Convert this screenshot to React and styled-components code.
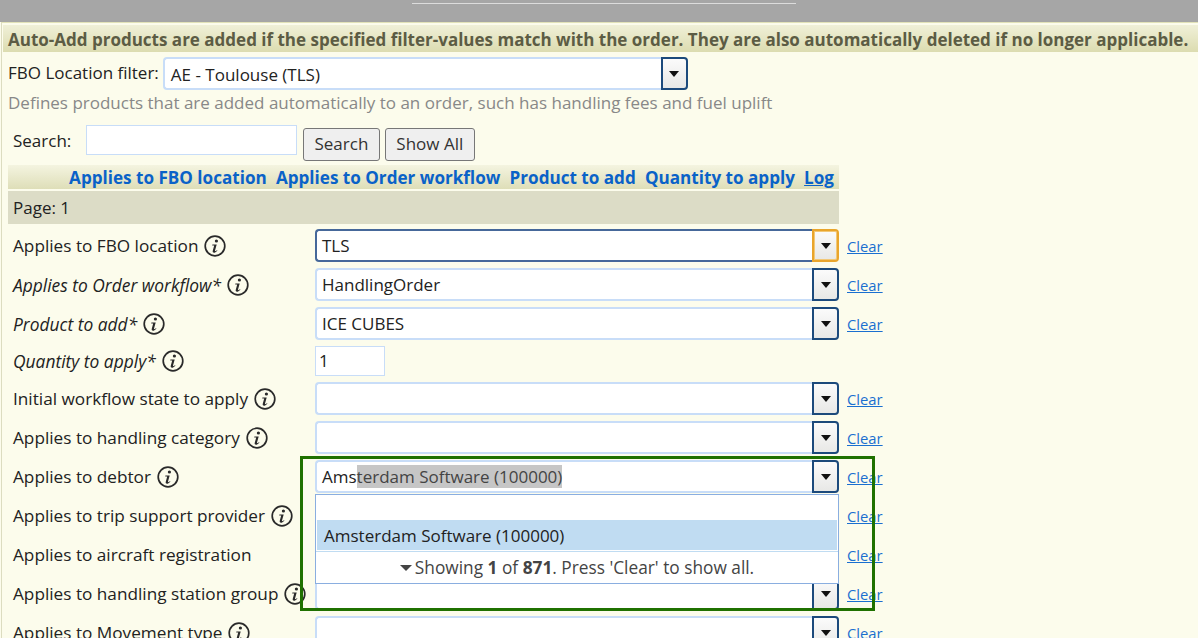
import React from 'react'
import styled, { createGlobalStyle } from 'styled-components'

const GlobalStyle = createGlobalStyle`
  html, body {
    margin: 0;
    padding: 0;
    height: 638px;
    overflow: hidden;
    background: #fcfcec;
  }
  body {
    font-family: 'Open Sans', 'Noto Sans', 'Liberation Sans', sans-serif;
    font-size: 17px;
    color: #222;
  }
`

const rows = [
  { label: 'Applies to FBO location', info: true, value: 'TLS', focused: true },
  { label: 'Applies to Order workflow*', info: true, value: 'HandlingOrder', italic: true },
  { label: 'Product to add*', info: true, value: 'ICE CUBES', italic: true },
  { label: 'Quantity to apply*', info: true, value: '1', italic: true, kind: 'number' },
  { label: 'Initial workflow state to apply', info: true, value: '' },
  { label: 'Applies to handling category', info: true, value: '' },
  { label: 'Applies to debtor', info: true, value: 'Amsterdam Software (100000)', open: true },
  { label: 'Applies to trip support provider', info: true, value: '' },
  { label: 'Applies to aircraft registration', value: '' },
  { label: 'Applies to handling station group', info: true, value: '' },
  { label: 'Applies to Movement type', info: true, value: '' },
]

const InfoIcon = () => (
  <InfoSvg viewBox="0 0 22 22" aria-hidden="true">
    <circle cx="11" cy="11" r="9.8" fill="none" stroke="#2a2a2a" strokeWidth="1.7" />
    <circle cx="12.4" cy="6" r="1.6" fill="#2a2a2a" />
    <path
      d="M8.4 9.4h4.3l-1.7 6.2c-.1.5.2.7.6.5l1.5-.9.3.6-2.3 1.6c-1.3.8-2.7.1-2.4-1.3l1.5-5.7H8.2z"
      fill="#2a2a2a"
    />
  </InfoSvg>
)

const Combo = ({ value, focused, open }) => (
  <ComboBox>
    <ComboInput $focused={focused}>
      {open ? (
        <>
          Ams<Selected>terdam Software (100000)</Selected>
        </>
      ) : (
        value
      )}
    </ComboInput>
    <ComboButton $focused={focused}>
      <Arrow />
    </ComboButton>
  </ComboBox>
)

const App = () => {
  return (
    <>
      <GlobalStyle />
      <TopBar>
        <TopLine />
      </TopBar>
      <Panel>
        <Banner>
          Auto-Add products are added if the specified filter-values match with the order. They are
          also automatically deleted if no longer applicable.
        </Banner>
        <FilterRow>
          <FilterLabel>FBO Location filter:</FilterLabel>
          <Combo value="AE - Toulouse (TLS)" />
        </FilterRow>
        <HelpText>Defines products that are added automatically to an order, such has handling fees and fuel uplift</HelpText>
        <SearchRow>
          <SearchLabel>Search:</SearchLabel>
          <SearchInput />
          <Button>Search</Button>
          <Button>Show All</Button>
        </SearchRow>
        <Grid>
          <HeaderBar>
            <HeaderLink>Applies to FBO location</HeaderLink>
            <HeaderLink>Applies to Order workflow</HeaderLink>
            <HeaderLink>Product to add</HeaderLink>
            <HeaderLink>Quantity to apply</HeaderLink>
            <HeaderLink $underline>Log</HeaderLink>
          </HeaderBar>
          <PageBar>Page: 1</PageBar>
          {rows.map((row) => (
            <Row key={row.label} $short={row.kind === 'number'}>
              <Label $italic={row.italic}>
                {row.label}
                {row.info && <InfoIcon />}
              </Label>
              {row.kind === 'number' ? (
                <NumberBox>{row.value}</NumberBox>
              ) : (
                <Combo value={row.value} focused={row.focused} open={row.open} />
              )}
              {row.kind !== 'number' && <ClearLink>Clear</ClearLink>}
              {row.open && (
                <Popup>
                  <PopupBlank />
                  <PopupItem>Amsterdam Software (100000)</PopupItem>
                  <PopupFooter>
                    <FooterArrow />
                    Showing <b>1</b> of <b>871</b>. Press 'Clear' to show all.
                  </PopupFooter>
                </Popup>
              )}
              {row.open && <Highlight />}
            </Row>
          ))}
        </Grid>
      </Panel>
    </>
  )
}

export default App

const TopBar = styled.div`
  height: 22px;
  background: #a6a6a6;
  display: flex;
  justify-content: flex-start;
  padding: 3px 0 0 412px;
  box-sizing: border-box;
`

const TopLine = styled.div`
  width: 384px;
  height: 1px;
  background: #dcdcdc;
`

const Panel = styled.div`
  margin-left: 1px;
  padding: 2px 0 0 1px;
  border-left: 1px solid #dcdcc0;
  border-top: 1px solid #e2e2b8;
  height: 616px;
  box-sizing: border-box;
  overflow: hidden;
`

const Banner = styled.div`
  height: 27px;
  line-height: 30px;
  padding-left: 5px;
  font-weight: 700;
  white-space: nowrap;
  color: #5c5c44;
  background: linear-gradient(#f0f0d8, #dcdcb0);
`

const FilterRow = styled.div`
  display: flex;
  align-items: center;
  gap: 4px;
  height: 33px;
  margin-top: 5px;
  padding-left: 5px;
  white-space: nowrap;
`

const FilterLabel = styled.span`
  padding-bottom: 3px;
`

const ComboBox = styled.div`
  position: relative;
  display: flex;
  width: 100%;
  height: 33px;
  box-sizing: border-box;
  ${FilterRow} & {
    width: 525px;
  }
`

const ComboInput = styled.div`
  flex: 1;
  min-width: 0;
  padding-left: 5px;
  line-height: 30px;
  color: #222;
  background: #fff;
  border: 2px solid ${(p) => (p.$focused ? '#46689a' : '#c8ddf8')};
  border-right: none;
  border-radius: 4px 0 0 4px;
  white-space: nowrap;
  overflow: hidden;
  box-sizing: border-box;
  ${FilterRow} & {
    padding-left: 6px;
    line-height: 32px;
  }
`

const Selected = styled.span`
  background: #c6c6c6;
  color: #444;
`

const ComboButton = styled.div`
  width: 27px;
  display: flex;
  align-items: center;
  justify-content: center;
  box-sizing: border-box;
  background: linear-gradient(#fbfbfb, #e8e8e6);
  border: 2px solid ${(p) => (p.$focused ? '#e9a52c' : '#1c4a7c')};
  box-shadow: ${(p) => (p.$focused ? 'inset 0 0 0 1px #f2c878' : 'none')};
  border-radius: 0 4px 4px 0;
`

const Arrow = styled.span`
  width: 0;
  height: 0;
  border-left: 5.5px solid transparent;
  border-right: 5.5px solid transparent;
  border-top: 6px solid #111;
`

const HelpText = styled.div`
  margin-top: 1px;
  height: 24px;
  line-height: 24px;
  padding-left: 5px;
  color: #888;
  white-space: nowrap;
`

const SearchRow = styled.div`
  display: flex;
  align-items: flex-start;
  height: 35px;
  margin-top: 10px;
  padding-left: 10px;
`

const SearchLabel = styled.span`
  width: 73px;
  line-height: 32px;
`

const SearchInput = styled.div`
  width: 211px;
  height: 30px;
  background: #fff;
  border: 1px solid #c8ddf8;
  box-sizing: border-box;
`

const Button = styled.button`
  margin: 3px 0 0 5px;
  height: 33px;
  padding: 0 10.5px 2px;
  font: inherit;
  color: #333;
  background: #efefef;
  border: 1px solid #777;
  border-radius: 3px;
  &:first-of-type {
    margin-left: 6px;
  }
`

const Grid = styled.div`
  width: 831px;
  margin: 5px 0 0 5px;
`

const HeaderBar = styled.div`
  display: flex;
  justify-content: flex-end;
  gap: 9.2px;
  height: 24px;
  padding-right: 5px;
  background: linear-gradient(#f4f4e0, #dedeb8);
  white-space: nowrap;
`

const HeaderLink = styled.span`
  font-size: 17.1px;
  font-weight: 700;
  line-height: 26px;
  color: #0a62c8;
  text-decoration: ${(p) => (p.$underline ? 'underline' : 'none')};
`

const PageBar = styled.div`
  height: 33px;
  margin: 2px 0 5px;
  padding-left: 5px;
  line-height: 33px;
  background: #dcdcc6;
`

const Row = styled.div`
  position: relative;
  display: grid;
  grid-template-columns: 302px 524px;
  align-items: center;
  width: 900px;
  padding-left: 5px;
  height: ${(p) => (p.$short ? '30px' : '33px')};
  margin-bottom: 6px;
  box-sizing: border-box;
`

const Label = styled.div`
  display: flex;
  align-items: center;
  gap: 6px;
  white-space: nowrap;
  font-size: ${(p) => (p.$italic ? '17.4px' : '17.2px')};
  font-style: ${(p) => (p.$italic ? 'italic' : 'normal')};
`

const InfoSvg = styled.svg`
  width: 22px;
  height: 22px;
  flex: none;
`

const NumberBox = styled.div`
  width: 70px;
  height: 30px;
  padding-left: 3px;
  line-height: 28px;
  background: #fff;
  border: 1px solid #c8ddf8;
  box-sizing: border-box;
`

const ClearLink = styled.a`
  position: absolute;
  left: 839px;
  top: 7px;
  font-size: 14.8px;
  color: #1a6fd0;
  text-decoration: underline;
`

const Popup = styled.div`
  position: absolute;
  left: 307px;
  top: 34px;
  width: 524px;
  height: 90px;
  z-index: 2;
  background: #fff;
  border: 1px solid #8aaee0;
  box-sizing: border-box;
`

const PopupBlank = styled.div`
  height: 25px;
`

const PopupItem = styled.div`
  height: 30px;
  margin: 0 1px;
  padding-left: 7px;
  line-height: 31px;
  color: #222;
  background: #c0dcf2;
`

const PopupFooter = styled.div`
  height: 32px;
  margin-top: 1px;
  border-top: 1px solid #c0dcf2;
  font-size: 17.3px;
  line-height: 32px;
  text-align: center;
  color: #444;
  box-sizing: border-box;
`

const FooterArrow = styled.span`
  display: inline-block;
  width: 0;
  height: 0;
  margin-right: 3px;
  vertical-align: 3px;
  border-left: 6px solid transparent;
  border-right: 6px solid transparent;
  border-top: 6px solid #444;
`

const Highlight = styled.div`
  position: absolute;
  left: 292px;
  top: -4px;
  width: 575px;
  height: 155px;
  z-index: 3;
  border: 3px solid #1f7100;
  box-sizing: border-box;
  pointer-events: none;
`
